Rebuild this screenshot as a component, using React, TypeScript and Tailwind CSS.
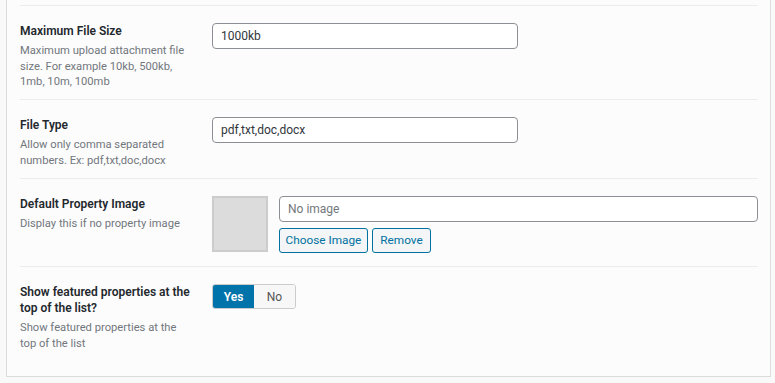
import React, { useState } from 'react';

const font = { fontFamily: 'Roboto, "Noto Sans", sans-serif' };

interface RowProps {
  label: string;
  description: string;
  className?: string;
  children: React.ReactNode;
}

const SettingRow: React.FC<RowProps> = ({ label, description, className = '', children }) => (
  <div className={`flex border-t border-[#ececec] pt-[17px] ${className}`}>
    <div className="w-[192px] shrink-0 pr-[12px]">
      <div className="text-[12px] font-semibold leading-[16px] text-[#23282d]">{label}</div>
      <p className="mt-[4px] max-w-[170px] text-[11.2px] leading-[15.5px] text-[#72777c]">{description}</p>
    </div>
    <div className="flex-1">{children}</div>
  </div>
);

const TextInput: React.FC<{ value: string; placeholder?: boolean; className?: string }> = ({
  value,
  placeholder = false,
  className = '',
}) => (
  <div
    className={`flex h-[26px] items-center rounded-[4px] border border-[#8c8f94] bg-white px-[8px] text-[12px] ${
      placeholder ? 'text-[#72777c]' : 'text-[#32373c]'
    } ${className}`}
  >
    {value}
  </div>
);

export default function App() {
  const [featured, setFeatured] = useState(true);

  return (
    <div className="h-[383px] w-[775px] overflow-hidden bg-[#f9f9f9]" style={font}>
      <div className="ml-[6px] h-[377px] w-[765px] border-x border-b border-[#dcdcdc] bg-[#fcfcfc] pl-[13px] pr-[12px] pt-[5px]">
        {/* Max file size */}
        <SettingRow
          label="Maximum File Size"
          description="Maximum upload attachment file size. For example 10kb, 500kb, 1mb, 10m, 100mb"
          className="h-[94px]"
        >
          <TextInput value="1000kb" className="w-[306px]" />
        </SettingRow>

        {/* File type */}
        <SettingRow
          label="File Type"
          description="Allow only comma separated numbers. Ex: pdf,txt,doc,docx"
          className="h-[79px]"
        >
          <TextInput value="pdf,txt,doc,docx" className="w-[306px]" />
        </SettingRow>

        {/* Default image */}
        <SettingRow
          label="Default Property Image"
          description="Display this if no property image"
          className="h-[88px]"
        >
          <div className="flex gap-[11px]">
            <div className="h-[56px] w-[56px] shrink-0 border-2 border-[#cccccc] bg-[#dcdcdc]" />
            <div className="flex flex-1 flex-col gap-[6px]">
              <TextInput value="No image" placeholder className="h-[25px]" />
              <div className="flex gap-[4px]">
                <button className="h-[25px] w-[89px] rounded-[3px] border border-[#0071a1] bg-[#f3f5f6] text-[11.8px] text-[#0071a1]">
                  Choose Image
                </button>
                <button className="h-[25px] w-[59px] rounded-[3px] border border-[#0071a1] bg-[#f3f5f6] text-[11.8px] text-[#0071a1]">
                  Remove
                </button>
              </div>
            </div>
          </div>
        </SettingRow>

        {/* Featured toggle */}
        <SettingRow
          label="Show featured properties at the top of the list?"
          description="Show featured properties at the top of the list"
        >
          <div className="flex h-[25px] w-[84px] overflow-hidden rounded-[3px] border border-[#cccccc] text-[12px]">
            <button
              onClick={() => setFeatured(true)}
              className={`w-[41px] ${
                featured ? 'bg-[#0073aa] font-semibold text-white' : 'bg-[#f7f7f7] text-[#555]'
              }`}
            >
              Yes
            </button>
            <button
              onClick={() => setFeatured(false)}
              className={`flex-1 ${
                !featured ? 'bg-[#0073aa] font-semibold text-white' : 'bg-[#f7f7f7] text-[#555]'
              }`}
            >
              No
            </button>
          </div>
        </SettingRow>
      </div>
    </div>
  );
}
